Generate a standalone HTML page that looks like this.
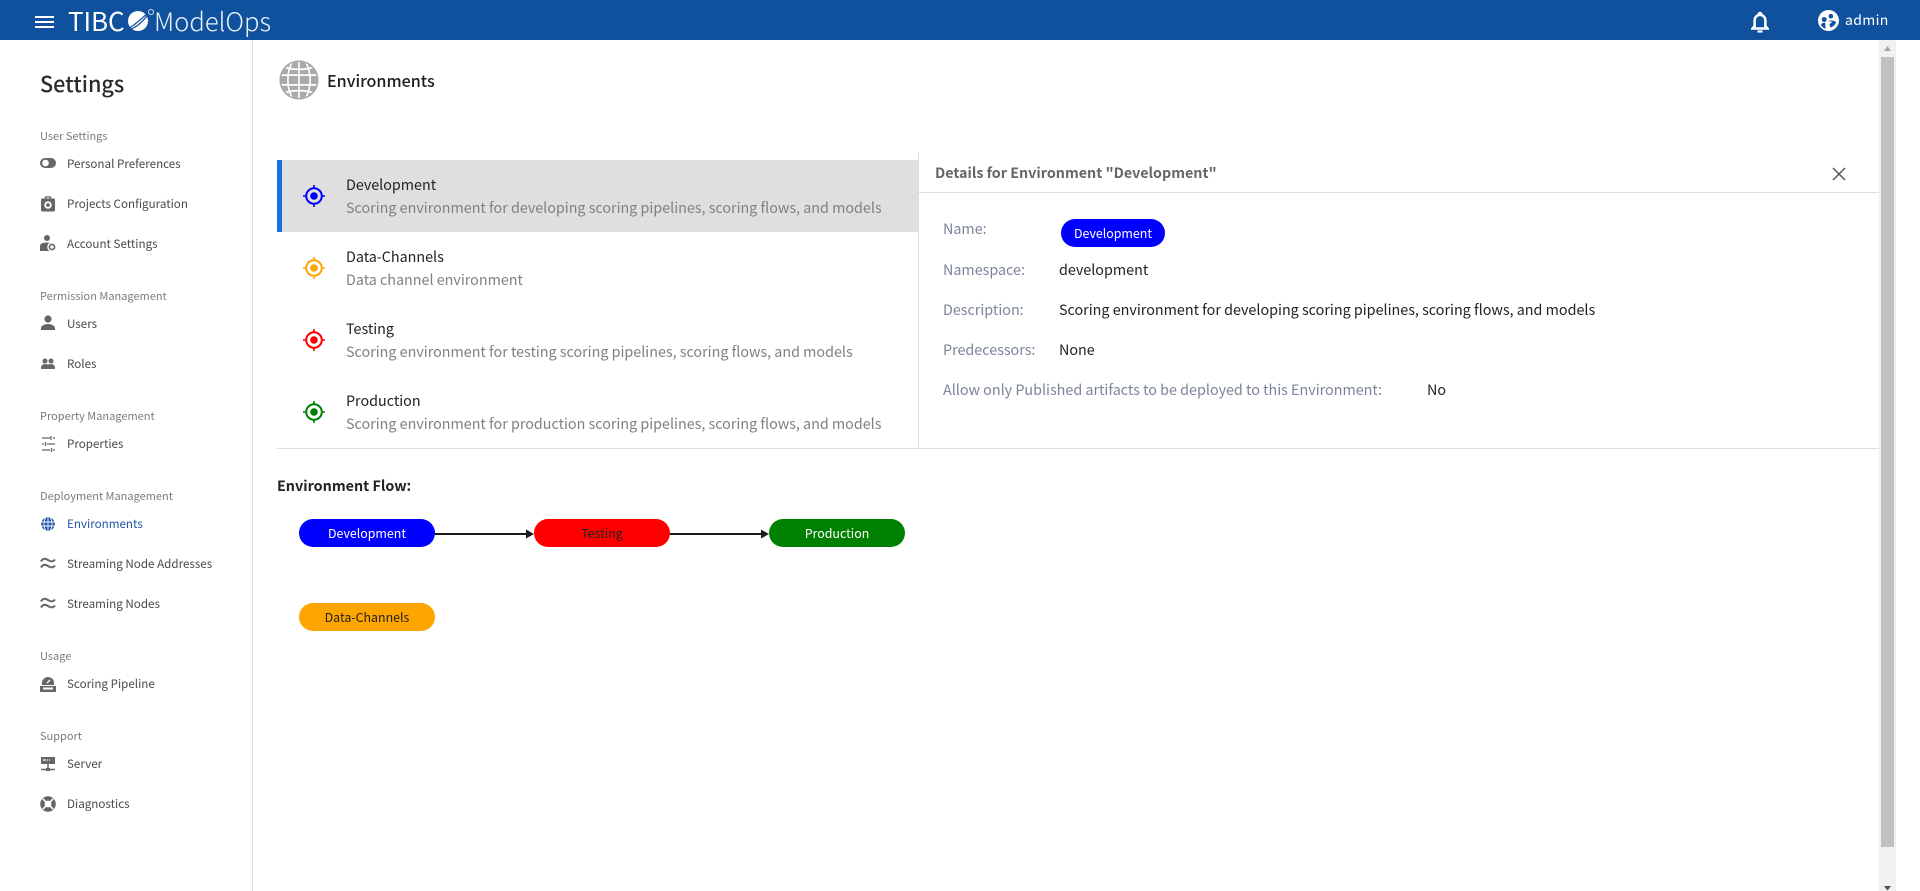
<!DOCTYPE html>
<html><head><meta charset="utf-8"><title>Environments</title>
<style>
html,body{margin:0;padding:0;width:1920px;height:891px;overflow:hidden;background:#fff}
body{font-family:"Noto Sans CJK JP","Liberation Sans",sans-serif;color:#222;position:relative}
.a{position:absolute;white-space:nowrap}
.t{position:absolute;white-space:nowrap;line-height:20px;height:20px}
.sec{left:40px;font-size:11px;color:#7b7b7b}
.it{left:67px;font-size:11.63px;color:#4a4a4a}
.ic{position:absolute;left:39px;width:18px;height:18px}
.nm{left:346px;font-size:14.32px;color:#222}
.ds{left:346px;font-size:14.32px;color:#808080}
.lb{left:943px;font-size:14.34px;color:#7b8498}
.vl{font-size:14.34px;color:#222}
.pill{position:absolute;height:28px;line-height:28px;border-radius:14px;text-align:center;font-size:12.4px;white-space:nowrap}
</style></head><body>
<div class="a" style="left:0;top:0;width:1920px;height:40px;background:#0f519c"></div>
<svg class="a" style="left:35px;top:16px" width="19" height="13"><path d="M0 1h19M0 6h19M0 11h19" stroke="#fff" stroke-width="2"/></svg>
<div class="a" style="left:68px;top:2px;font-size:26px;line-height:38px;color:#fff;font-weight:400;letter-spacing:-.1px">TIBC</div>
<svg class="a" style="left:128px;top:10px" width="22" height="22"><circle cx="10" cy="11" r="10" fill="#fff"/><path d="M1 18C7 15 13 9 20 3M3 19C9 17 14 12 19 6" stroke="#0f519c" stroke-width="1.3" fill="none"/></svg>
<div class="a" style="left:148px;top:9px;width:4px;height:4px;border:1px solid #cfe0f0;border-radius:50%"></div>
<div class="a" style="left:154px;top:2px;font-size:25.6px;line-height:38px;color:#e8f1fa;font-weight:300">ModelOps</div>
<svg class="a" style="left:1751px;top:11px" width="18" height="22" viewBox="0 0 18 22"><path d="M9 2a1.200 1.200 0 0 1 1.200 1.200v.8C13 4.800 14.400 7.200 14.400 10v5.200l2 2.300H1.600l2-2.300V10C3.600 7.200 5 4.800 7.800 4v-.8A1.200 1.200 0 0 1 9 2z" fill="none" stroke="#fff" stroke-width="2.500"/><path d="M6.500 20.500h5" stroke="#fff" stroke-width="2.200"/></svg>
<svg class="a" style="left:1818px;top:10px" width="21" height="21" viewBox="0 0 22 22"><circle cx="11" cy="11" r="11" fill="#fff"/><circle cx="6.500" cy="10" r="2.600" fill="#0f519c"/><circle cx="13.500" cy="6.500" r="2.400" fill="#0f519c"/><path d="M3 15.500c1-1.800 3-2.300 4.500-2.300l.5 6.500c-2-.5-4-2-5-4.200zM10.500 11.500c3-1 6-.5 8.500 1-.5 2.500-3 5-6 6l-1-3.500 3-2.500z" fill="#0f519c"/></svg>
<div class="t" style="left:1845px;top:10px;font-size:14px;color:#fff;letter-spacing:.35px">admin</div>

<!-- sidebar -->
<div class="a" style="left:252px;top:40px;width:1px;height:851px;background:#ddd"></div>
<div class="t" style="left:40px;top:72px;font-size:21.6px;line-height:24px;height:24px;font-weight:500;color:#2c2c2c">Settings</div>

<div class="t sec" style="top:126px">User Settings</div>
<svg class="ic" style="top:155px" viewBox="0 0 18 18"><rect x="1" y="3" width="16" height="10" rx="5" fill="#666"/><circle cx="6.500" cy="8" r="3.300" fill="#fff"/></svg>
<div class="t it" style="top:154px">Personal Preferences</div>
<svg class="ic" style="top:195px" viewBox="0 0 18 18"><rect x="2" y="3.500" width="14" height="13" rx="1.500" fill="#666"/><path d="M6.500 4V2h5v2" fill="none" stroke="#666" stroke-width="1.300"/><circle cx="9" cy="10" r="2.800" fill="none" stroke="#fff" stroke-width="1.800"/></svg>
<div class="t it" style="top:194px">Projects Configuration</div>
<svg class="ic" style="top:234px" viewBox="0 0 18 18"><circle cx="8" cy="4" r="3" fill="#666"/><path d="M1 17v-5c0-2 2-3.500 7-3.500 1 0 2 .100 3 .300V17z" fill="#666"/><circle cx="13" cy="13" r="4.800" fill="#fff"/><circle cx="13" cy="13" r="2.600" fill="none" stroke="#666" stroke-width="1.600"/></svg>
<div class="t it" style="top:234px">Account Settings</div>

<div class="t sec" style="top:286px">Permission Management</div>
<svg class="ic" style="top:315px" viewBox="0 0 18 18"><circle cx="9" cy="4" r="3.600" fill="#666"/><path d="M2 15v-2c0-2.500 4-4 7-4s7 1.500 7 4v2z" fill="#666"/></svg>
<div class="t it" style="top:314px">Users</div>
<svg class="ic" style="top:355px" viewBox="0 0 18 18"><circle cx="6" cy="6" r="2.500" fill="#666"/><circle cx="12" cy="6" r="2.500" fill="#666"/><path d="M2 14v-1.500c0-2 2-3.500 4-3.500s3 .600 3 1c0-.400 1-1 3-1s4 1.500 4 3.500V14z" fill="#666"/></svg>
<div class="t it" style="top:354px">Roles</div>

<div class="t sec" style="top:406px">Property Management</div>
<svg class="ic" style="top:435px" viewBox="0 0 18 18"><path d="M3 3h8M14 3h2M3 9h2M8 9h8M3 15h8M14 15h2M12 1v4M6.500 7v4M12.500 13v4" stroke="#666" stroke-width="1.300" fill="none"/></svg>
<div class="t it" style="top:434px">Properties</div>

<div class="t sec" style="top:486px">Deployment Management</div>
<svg class="ic" style="top:515px" viewBox="0 0 18 18"><circle cx="9" cy="9" r="6.800" fill="#1f55a5"/><path d="M2.500 7h13M2.500 11h13M9 2.500v13M6.500 2.500c-2 4-2 9 0 13M11.500 2.500c2 4 2 9 0 13" stroke="#fff" stroke-width=".9" fill="none"/></svg>
<div class="t it" style="top:514px;color:#1f55a5">Environments</div>
<svg class="ic" style="top:555px" viewBox="0 0 18 18"><path d="M2 6.500C3.500 3.500 6 3 9 5s5 2 7-.5M2 12.500C3.500 9.500 6 9 9 11s5 2 7-.5" stroke="#666" stroke-width="2" fill="none"/></svg>
<div class="t it" style="top:554px">Streaming Node Addresses</div>
<svg class="ic" style="top:595px" viewBox="0 0 18 18"><path d="M2 6.500C3.500 3.500 6 3 9 5s5 2 7-.5M2 12.500C3.500 9.500 6 9 9 11s5 2 7-.5" stroke="#666" stroke-width="2" fill="none"/></svg>
<div class="t it" style="top:594px">Streaming Nodes</div>

<div class="t sec" style="top:646px">Usage</div>
<svg class="ic" style="top:675px" viewBox="0 0 18 18"><path d="M3 10V8a6 6 0 0 1 12 0v2z" fill="#666"/><path d="M8 8l3-3" stroke="#fff" stroke-width="1.300"/><rect x="1" y="11" width="16" height="6" fill="#666"/><rect x="4" y="12.500" width="10" height="2" fill="#fff"/></svg>
<div class="t it" style="top:674px">Scoring Pipeline</div>

<div class="t sec" style="top:726px">Support</div>
<svg class="ic" style="top:755px" viewBox="0 0 18 18"><rect x="2" y="2" width="14" height="7" fill="#666"/><path d="M4 5h3M8 5h1M10 5h1" stroke="#fff" stroke-width="1.300"/><path d="M9 9v6M2 14.500h14" stroke="#666" stroke-width="1.500"/><rect x="7" y="13" width="4" height="3" fill="#666"/></svg>
<div class="t it" style="top:754px">Server</div>
<svg class="ic" style="top:795px" viewBox="0 0 18 18"><circle cx="9" cy="9" r="7.800" fill="#666"/><circle cx="9" cy="9" r="3.400" fill="#fff"/><path d="M3.800 3.800l3 3M14.200 3.800l-3 3M3.800 14.200l3-3M14.200 14.200l-3-3" stroke="#fff" stroke-width="1.500"/></svg>
<div class="t it" style="top:794px">Diagnostics</div>

<!-- heading -->
<svg class="a" style="left:279px;top:60px" width="40" height="40" viewBox="0 0 41 41"><circle cx="20.500" cy="20.500" r="20" fill="#aaa"/><g fill="none" stroke="#fff" stroke-width="1.700"><path d="M2 15.500h37M2 25.500h37M20.500 0v41"/><path d="M14 1.500c-6.500 11-6.500 27 0 38M27 1.500c6.500 11 6.500 27 0 38"/><path d="M6 7.500c9 2.800 20 2.800 29 0M6 33.500c9-2.800 20-2.800 29 0"/></g><circle cx="20.500" cy="20.500" r="19.300" fill="none" stroke="#aaa" stroke-width="1.500"/></svg>
<div class="t" style="left:327px;top:70px;font-size:16.1px;font-weight:500;color:#1d1d1d">Environments</div>

<!-- list -->
<div class="a" style="left:277px;top:160px;width:641px;height:72px;background:#dfdfdf"></div>
<div class="a" style="left:277px;top:160px;width:5px;height:72px;background:#1a6fe0"></div>
<div class="a" style="left:918px;top:152px;width:1px;height:296px;background:#ddd"></div>
<div class="a" style="left:919px;top:192px;width:961px;height:1px;background:#ddd"></div>
<div class="a" style="left:277px;top:448px;width:1603px;height:1px;background:#ddd"></div>

<svg class="a" style="left:303px;top:185px" width="22" height="22" viewBox="0 0 22 22"><circle cx="11" cy="11" r="7.800" fill="none" stroke="#0000ff" stroke-width="2"/><circle cx="11" cy="11" r="3.800" fill="#0000ff"/><path d="M11 0v4M11 18v4M0 11h4M18 11h4" stroke="#0000ff" stroke-width="1.600"/></svg>
<svg class="a" style="left:303px;top:257px" width="22" height="22" viewBox="0 0 22 22"><circle cx="11" cy="11" r="7.800" fill="none" stroke="#ffa500" stroke-width="2"/><circle cx="11" cy="11" r="3.800" fill="#ffa500"/><path d="M11 0v4M11 18v4M0 11h4M18 11h4" stroke="#ffa500" stroke-width="1.600"/></svg>
<svg class="a" style="left:303px;top:329px" width="22" height="22" viewBox="0 0 22 22"><circle cx="11" cy="11" r="7.800" fill="none" stroke="#ff0000" stroke-width="2"/><circle cx="11" cy="11" r="3.800" fill="#ff0000"/><path d="M11 0v4M11 18v4M0 11h4M18 11h4" stroke="#ff0000" stroke-width="1.600"/></svg>
<svg class="a" style="left:303px;top:401px" width="22" height="22" viewBox="0 0 22 22"><circle cx="11" cy="11" r="7.800" fill="none" stroke="#008000" stroke-width="2"/><circle cx="11" cy="11" r="3.800" fill="#008000"/><path d="M11 0v4M11 18v4M0 11h4M18 11h4" stroke="#008000" stroke-width="1.600"/></svg>

<div class="t nm" style="top:175px">Development</div>
<div class="t ds" style="top:198px">Scoring environment for developing scoring pipelines, scoring flows, and models</div>
<div class="t nm" style="top:247px">Data-Channels</div>
<div class="t ds" style="top:270px">Data channel environment</div>
<div class="t nm" style="top:319px">Testing</div>
<div class="t ds" style="top:342px">Scoring environment for testing scoring pipelines, scoring flows, and models</div>
<div class="t nm" style="top:391px">Production</div>
<div class="t ds" style="top:414px">Scoring environment for production scoring pipelines, scoring flows, and models</div>

<!-- details -->
<div class="t" style="left:935px;top:163px;font-size:14.3px;font-weight:700;color:#666">Details for Environment "Development"</div>
<svg class="a" style="left:1832px;top:167px" width="14" height="14"><path d="M1 1l12 12M13 1L1 13" stroke="#555" stroke-width="1.500"/></svg>
<div class="t lb" style="top:219px">Name:</div>
<div class="pill" style="left:1061px;top:219px;width:104px;background:#0000ff;color:#fff">Development</div>
<div class="t lb" style="top:260px">Namespace:</div>
<div class="t vl" style="left:1059px;top:260px">development</div>
<div class="t lb" style="top:300px">Description:</div>
<div class="t vl" style="left:1059px;top:300px">Scoring environment for developing scoring pipelines, scoring flows, and models</div>
<div class="t lb" style="top:340px">Predecessors:</div>
<div class="t vl" style="left:1059px;top:340px">None</div>
<div class="t lb" style="top:380px">Allow only Published artifacts to be deployed to this Environment:</div>
<div class="t vl" style="left:1427px;top:380px">No</div>

<!-- flow -->
<div class="t" style="left:277px;top:476px;font-size:14.33px;font-weight:700;color:#222">Environment Flow:</div>
<div class="pill" style="left:299px;top:519px;width:136px;background:#0000ff;color:#fff">Development</div>
<div class="pill" style="left:534px;top:519px;width:136px;background:#ff0000;color:#222">Testing</div>
<div class="pill" style="left:769px;top:519px;width:136px;background:#008000;color:#fff">Production</div>
<div class="pill" style="left:299px;top:603px;width:136px;background:#ffa500;color:#222">Data-Channels</div>
<svg class="a" style="left:435px;top:526px" width="340" height="16"><path d="M0 8h92M235 8h92" stroke="#1a1a1a" stroke-width="2"/><path d="M91 3.500l8 4.500-8 4.500zM326 3.500l8 4.500-8 4.500z" fill="#1a1a1a"/></svg>

<!-- scrollbar -->
<div class="a" style="left:1879px;top:40px;width:17px;height:851px;background:#f1f1f1"></div>
<div class="a" style="left:1881px;top:57px;width:13px;height:790px;background:#c1c1c1"></div>
<svg class="a" style="left:1883px;top:46px" width="9" height="6"><path d="M4.500 0L8 5H1z" fill="#a3a3a3"/></svg>
<svg class="a" style="left:1883px;top:885px" width="9" height="6"><path d="M1 1h7L4.500 5.500z" fill="#505050"/></svg>
</body></html>
